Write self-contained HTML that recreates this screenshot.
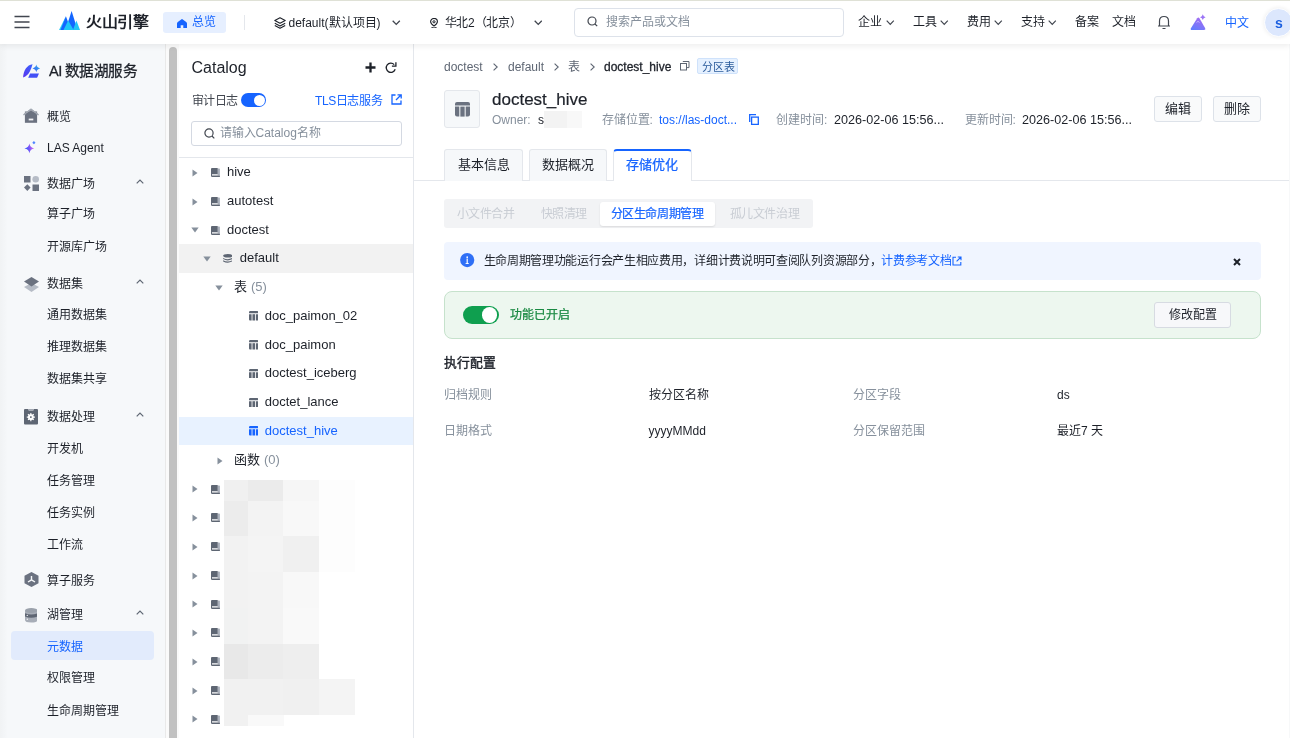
<!DOCTYPE html>
<html lang="zh-CN"><head><meta charset="utf-8">
<style>
*{box-sizing:border-box;margin:0;padding:0}
html,body{width:1290px;height:738px;overflow:hidden;background:#fff;font-family:"Liberation Sans",sans-serif;color:#1d2129}
.a{position:absolute;white-space:nowrap}
#hdr,#side,#cat,#main{will-change:transform}
#hdr{position:absolute;left:0;top:0;width:1290px;height:44px;background:#fff;box-shadow:0 2px 6px rgba(0,0,0,0.075);z-index:5}
#side{position:absolute;left:0;top:44px;width:165.5px;height:694px;background:#f6f8fa}
#sb{position:absolute;left:165px;top:44px;width:14.5px;height:694px;background:#fafafa;border-left:1px solid #e9e9e9;border-right:1px solid #ececec}
#thumb{position:absolute;left:3px;top:3px;width:8.2px;height:700px;border-radius:4px;background:#c1c1c1}
#cat{position:absolute;left:179px;top:44px;width:235px;height:694px;background:#fff;border-right:1px solid #e4e7ec}
#main{position:absolute;left:414px;top:44px;width:876px;height:694px;background:#fff}
.t12{font-size:12px;line-height:20px}
.t13{font-size:13px;line-height:20px}
</style></head>
<body>
<div id="hdr">
<div class="a" style="left:0;top:0;width:1290px;height:1px;background:#dfe1d6"></div>
<svg class="a" style="left:14px;top:15px" width="16" height="14" viewBox="0 0 16 14"><path d="M0.5 1.5H15.5M0.5 7H15.5M0.5 12.5H15.5" stroke="#41464f" stroke-width="1.6"/></svg>
<svg class="a" style="left:59px;top:11px" width="22" height="19" viewBox="0 0 22 19"><path d="M0 19 L6.9 5.3 L3 19 Z" fill="#2bd0f7"/><path d="M1.5 19 L6.9 5.3 L12 19 Z" fill="#1466ff"/><path d="M6.5 19 L12.6 0 L18.6 19 Z" fill="#1466ff"/><path d="M14 19 L17.4 9.4 L21 19 Z" fill="#22c6f6"/><path d="M4.5 19 L9.2 9.5 L14.6 19 Z" fill="#1fc6f7"/></svg>
<div class="a" style="left:86px;top:11px;font-size:16px;line-height:22px;font-weight:700;color:#1d2129;letter-spacing:-0.3px;transform:scaleY(0.9);transform-origin:0 16px">火山引擎</div>
<div class="a" style="left:163px;top:12px;width:63px;height:21px;border-radius:3px;background:#e6efff"></div>
<svg class="a" style="left:176.5px;top:18.8px" width="10" height="9.2" viewBox="0 0 10 9.2"><path d="M0 9.2 V4.6 Q0 3.6 0.8 3 L4.2 0.4 Q5 -0.2 5.8 0.4 L9.2 3 Q10 3.6 10 4.6 V9.2 H6.3 V6.2 H3.7 V9.2 Z" fill="#1664ff"/></svg>
<div class="a" style="left:192px;top:12px;font-size:12px;line-height:20px;color:#1664ff">总览</div>
<div class="a" style="left:244px;top:15px;width:1px;height:15px;background:#e4e7ec"></div>
<svg class="a" style="left:273.5px;top:16.5px" width="12" height="12" viewBox="0 0 12 12"><path d="M6 0.8 L11.2 3.5 L6 6.2 L0.8 3.5 Z M0.8 6.2 L6 8.9 L11.2 6.2 M0.8 8.6 L6 11.3 L11.2 8.6" fill="none" stroke="#1d2129" stroke-width="1.1" stroke-linejoin="round"/></svg>
<div class="a" style="left:288.5px;top:12.5px;font-size:12px;line-height:20px;color:#1d2129">default(默认项目)</div>
<svg class="a" style="left:392px;top:20px" width="8.5" height="5.5" viewBox="0 0 8.5 5.5"><path d="M0.7 0.8 L4.25 4.4 L7.8 0.8" fill="none" stroke="#41464f" stroke-width="1.3"/></svg>
<svg class="a" style="left:429.8px;top:17.5px" width="8" height="10.5" viewBox="0 0 8 10.5"><path d="M4 8 Q0.6 5.6 0.6 3.8 A3.4 3.4 0 0 1 7.4 3.8 Q7.4 5.6 4 8 Z" fill="none" stroke="#1d2129" stroke-width="1.1" stroke-linejoin="round"/><circle cx="4" cy="3.8" r="1.1" fill="none" stroke="#1d2129" stroke-width="1"/><path d="M1.5 9.6 Q4 10.6 6.5 9.6" fill="none" stroke="#1d2129" stroke-width="1.1"/></svg>
<div class="a" style="left:444.5px;top:12.5px;font-size:12px;letter-spacing:-0.2px;line-height:20px;color:#1d2129">华北2（北京）</div>
<svg class="a" style="left:533.5px;top:20px" width="8.5" height="5.5" viewBox="0 0 8.5 5.5"><path d="M0.7 0.8 L4.25 4.4 L7.8 0.8" fill="none" stroke="#41464f" stroke-width="1.3"/></svg>
<div class="a" style="left:574px;top:8px;width:270px;height:29px;border:1px solid #dde2ea;border-radius:4px;background:#fff"></div>
<svg class="a" style="left:587px;top:16px" width="11" height="12" viewBox="0 0 11 12"><circle cx="5" cy="5" r="4" fill="none" stroke="#41464f" stroke-width="1.2"/><path d="M8 8 L10.2 10.2" stroke="#41464f" stroke-width="1.2"/></svg>
<div class="a" style="left:606px;top:12px;font-size:12px;line-height:20px;color:#86909c">搜索产品或文档</div>
<div class="a" style="left:858px;top:12px;font-size:12px;line-height:20px;color:#1d2129">企业</div>
<div class="a" style="left:913px;top:12px;font-size:12px;line-height:20px;color:#1d2129">工具</div>
<div class="a" style="left:967px;top:12px;font-size:12px;line-height:20px;color:#1d2129">费用</div>
<div class="a" style="left:1021px;top:12px;font-size:12px;line-height:20px;color:#1d2129">支持</div>
<div class="a" style="left:1075px;top:12px;font-size:12px;line-height:20px;color:#1d2129">备案</div>
<div class="a" style="left:1112px;top:12px;font-size:12px;line-height:20px;color:#1d2129">文档</div>
<svg class="a" style="left:886.3px;top:20.3px" width="8.5" height="5.5" viewBox="0 0 8.5 5.5"><path d="M0.7 0.7 L4.25 4.3 L7.8 0.7" fill="none" stroke="#41464f" stroke-width="1.2"/></svg>
<svg class="a" style="left:940.3px;top:20.3px" width="8.5" height="5.5" viewBox="0 0 8.5 5.5"><path d="M0.7 0.7 L4.25 4.3 L7.8 0.7" fill="none" stroke="#41464f" stroke-width="1.2"/></svg>
<svg class="a" style="left:994.3px;top:20.3px" width="8.5" height="5.5" viewBox="0 0 8.5 5.5"><path d="M0.7 0.7 L4.25 4.3 L7.8 0.7" fill="none" stroke="#41464f" stroke-width="1.2"/></svg>
<svg class="a" style="left:1048.3px;top:20.3px" width="8.5" height="5.5" viewBox="0 0 8.5 5.5"><path d="M0.7 0.7 L4.25 4.3 L7.8 0.7" fill="none" stroke="#41464f" stroke-width="1.2"/></svg>
<svg class="a" style="left:1157px;top:14px" width="14" height="16" viewBox="0 0 14 16"><path d="M2.5 12 V7 Q2.5 2.5 7 2.5 Q11.5 2.5 11.5 7 V12 Z M1 12 H13 M5.5 14.5 H8.5" fill="none" stroke="#41464f" stroke-width="1.2"/></svg>
<svg class="a" style="left:1190px;top:14px" width="17" height="17" viewBox="0 0 17 17"><defs><linearGradient id="ga" x1="0" y1="1" x2="0.6" y2="0"><stop offset="0" stop-color="#5b80ff"/><stop offset="1" stop-color="#a36cf2"/></linearGradient></defs><path d="M7.2 4.2 Q8.5 2.8 9.6 4.4 L15.2 14.2 Q16 16 14 16 H2 Q0 16 0.9 14.2 Z" fill="url(#ga)"/><path d="M12.8 0.3 Q13.3 2.6 15.6 3.2 Q13.3 3.8 12.8 6.1 Q12.3 3.8 10 3.2 Q12.3 2.6 12.8 0.3 Z" fill="#9b74f6"/><path d="M6.5 8.5 L8 7.3 L9.5 8.5" fill="none" stroke="#c9c2ff" stroke-width="0.8"/></svg>
<div class="a" style="left:1224.5px;top:12.5px;font-size:12px;line-height:20px;color:#1664ff">中文</div>
<div class="a" style="left:1264px;top:8px;width:29px;height:29px;border-radius:50%;background:#dce7fd;border:1.5px solid #fff;box-shadow:0 0 4px rgba(0,0,0,0.08)"></div>
<div class="a" style="left:1275px;top:12.5px;font-size:14px;line-height:20px;font-weight:700;color:#1b5fe0">s</div>
</div>
<div id="side">
<div class="a" style="left:0;top:0;width:8px;height:694px;background:linear-gradient(90deg,rgba(0,0,0,0.025),rgba(0,0,0,0))"></div>
<svg class="a" style="left:22px;top:19px" width="19" height="16" viewBox="0 0 19 16"><defs><linearGradient id="gl" x1="0" y1="1" x2="0.6" y2="0"><stop offset="0" stop-color="#5a34ee"/><stop offset="1" stop-color="#3f5dfb"/></linearGradient><linearGradient id="gk" x1="0" y1="1" x2="1" y2="0"><stop offset="0" stop-color="#3f56f8"/><stop offset="1" stop-color="#2bb4ea"/></linearGradient></defs><path d="M1.1 14.5 C1.3 8 5 1.6 10.6 1.2 C9.2 5 7.8 12.4 1.1 14.5 Z" fill="url(#gl)"/><path d="M6.2 14.7 L8.1 10.6 H17 L15.1 14.7 Z" fill="#4250f6"/><path d="M14.3 1.6 Q14.9 4.8 18.1 5.4 Q14.9 6 14.3 9.2 Q13.7 6 10.5 5.4 Q13.7 4.8 14.3 1.6 Z" fill="url(#gk)"/></svg>
<div class="a" style="left:49px;top:16.5px;font-size:14.6px;line-height:20px;color:#1d2129;-webkit-text-stroke:0.3px #1d2129;letter-spacing:-0.6px">AI 数据湖服务</div>
<div class="a" style="left:11px;top:587px;width:143px;height:29px;border-radius:4px;background:#e2ebfc"></div>
<div class="a" style="left:47px;top:62.7px;font-size:12px;line-height:20px;color:#1d2129">概览</div>
<svg class="a" style="left:23px;top:64px" width="16" height="15" viewBox="0 0 16 15"><rect x="1.9" y="3.5" width="12.2" height="11.3" fill="#6b7280"/><path d="M8 0.4 L15.7 6.2 V7.6 L8 2.3 L0.3 7.6 V6.2 Z" fill="#a3a9b3"/><path d="M8 0.5 L15.6 6.3 L14.3 7.2 L8 2.6 L1.7 7.2 L0.4 6.3 Z" fill="#a3a9b3"/><path d="M1.9 6.5 L8 2.4 L14.1 6.5" fill="#6b7280"/><rect x="5.7" y="10.6" width="4.6" height="1.8" fill="#f2f3f5"/></svg>
<div class="a" style="left:47px;top:93.5px;font-size:12px;line-height:20px;color:#1d2129">LAS Agent</div>
<svg class="a" style="left:24px;top:97px" width="13" height="13" viewBox="0 0 13 13"><defs><linearGradient id="gs" x1="0" y1="0.6" x2="1" y2="0.4"><stop offset="0" stop-color="#2458ff"/><stop offset="0.5" stop-color="#7a55f7"/><stop offset="1" stop-color="#e070ee"/></linearGradient></defs><path d="M5.4 2.6 Q5.9 6.6 10.3 7.4 Q5.9 8.2 5.4 12.2 Q4.9 8.2 0.5 7.4 Q4.9 6.6 5.4 2.6 Z" fill="url(#gs)"/><path d="M9.9 0.1 L11.5 1.7 L9.9 3.3 L8.3 1.7 Z" fill="#4f86ff"/></svg>
<div class="a" style="left:47px;top:130.2px;font-size:12px;line-height:20px;color:#1d2129">数据广场</div>
<svg class="a" style="left:23.5px;top:131.5px" width="15" height="15" viewBox="0 0 15 15"><rect x="0" y="0" width="6.5" height="6.5" fill="#6b7280"/><circle cx="11.7" cy="3.3" r="3.3" fill="#b6bcc6"/><path d="M3.3 8.3 L6.6 11.6 L3.3 14.9 L0 11.6 Z" fill="#6b7280"/><rect x="8.5" y="8.5" width="6.5" height="6.5" fill="#6b7280"/></svg>
<svg class="a" style="left:135.5px;top:135px" width="8" height="5" viewBox="0 0 8 5"><path d="M0.7 4.3 L4 1 L7.3 4.3" fill="none" stroke="#5e6673" stroke-width="1.2"/></svg>
<div class="a" style="left:47px;top:160.2px;font-size:12px;line-height:20px;color:#1d2129">算子广场</div>
<div class="a" style="left:47px;top:192.5px;font-size:12px;line-height:20px;color:#1d2129">开源库广场</div>
<div class="a" style="left:47px;top:230.0px;font-size:12px;line-height:20px;color:#1d2129">数据集</div>
<svg class="a" style="left:23.5px;top:232.5px" width="15" height="15" viewBox="0 0 15 15"><path d="M7.5 6 L15 10 L7.5 15 L0 10 Z" fill="#b6bcc6"/><path d="M7.5 0 L15 4.5 L7.5 9.5 L0 4.5 Z" fill="#6b7280"/></svg>
<svg class="a" style="left:135.5px;top:234.8px" width="8" height="5" viewBox="0 0 8 5"><path d="M0.7 4.3 L4 1 L7.3 4.3" fill="none" stroke="#5e6673" stroke-width="1.2"/></svg>
<div class="a" style="left:47px;top:261.0px;font-size:12px;line-height:20px;color:#1d2129">通用数据集</div>
<div class="a" style="left:47px;top:293.0px;font-size:12px;line-height:20px;color:#1d2129">推理数据集</div>
<div class="a" style="left:47px;top:325.4px;font-size:12px;line-height:20px;color:#1d2129">数据集共享</div>
<div class="a" style="left:47px;top:363.2px;font-size:12px;line-height:20px;color:#1d2129">数据处理</div>
<svg class="a" style="left:24px;top:365px" width="14" height="15.5" viewBox="0 0 14 15.5"><path d="M1 0 H4 L5 1.5 H9 L10 0 H13 Q14 0 14 1 V14.5 Q14 15.5 13 15.5 H1 Q0 15.5 0 14.5 V1 Q0 0 1 0 Z" fill="#5e6673"/><rect x="4.2" y="0" width="5.6" height="1.5" fill="#a3a9b3"/><path d="M9.78 7.46 L10.92 7.57 L10.92 8.63 L9.78 8.74 L9.38 9.72 L10.10 10.60 L9.35 11.35 L8.47 10.63 L7.49 11.03 L7.38 12.17 L6.32 12.17 L6.21 11.03 L5.23 10.63 L4.35 11.35 L3.60 10.60 L4.32 9.72 L3.92 8.74 L2.78 8.63 L2.78 7.57 L3.92 7.46 L4.32 6.48 L3.60 5.60 L4.35 4.85 L5.23 5.57 L6.21 5.17 L6.32 4.03 L7.38 4.03 L7.49 5.17 L8.47 5.57 L9.35 4.85 L10.10 5.60 L9.38 6.48 Z" fill="#fff"/><circle cx="6.85" cy="8.1" r="1.6" fill="#fff"/><rect x="6.05" y="7.3" width="1.6" height="1.6" fill="#5e6673"/></svg>
<svg class="a" style="left:135.5px;top:368px" width="8" height="5" viewBox="0 0 8 5"><path d="M0.7 4.3 L4 1 L7.3 4.3" fill="none" stroke="#5e6673" stroke-width="1.2"/></svg>
<div class="a" style="left:47px;top:394.7px;font-size:12px;line-height:20px;color:#1d2129">开发机</div>
<div class="a" style="left:47px;top:426.5px;font-size:12px;line-height:20px;color:#1d2129">任务管理</div>
<div class="a" style="left:47px;top:458.8px;font-size:12px;line-height:20px;color:#1d2129">任务实例</div>
<div class="a" style="left:47px;top:491.0px;font-size:12px;line-height:20px;color:#1d2129">工作流</div>
<div class="a" style="left:47px;top:527.2px;font-size:12px;line-height:20px;color:#1d2129">算子服务</div>
<svg class="a" style="left:23.5px;top:528px" width="15" height="15" viewBox="0 0 15 15"><path d="M7.5 0 L14.5 3.8 V11.2 L7.5 15 L0.5 11.2 V3.8 Z" fill="#6b7280"/><path d="M7.5 4 V7.8 M7.5 7.8 L4 10 M7.5 7.8 L11 10" stroke="#f6f8fa" stroke-width="1.4"/></svg>
<div class="a" style="left:47px;top:561.2px;font-size:12px;line-height:20px;color:#1d2129">湖管理</div>
<svg class="a" style="left:24.8px;top:564px" width="12.5" height="14.5" viewBox="0 0 12.5 14.5"><path d="M0 2.5 V12 Q0 14.5 6.25 14.5 Q12.5 14.5 12.5 12 V2.5 Z" fill="#a7adb7"/><ellipse cx="6.25" cy="2.5" rx="6.25" ry="2.5" fill="#9aa1ab"/><path d="M0 5.2 Q6.25 7.6 12.5 5.2 V8.6 Q6.25 11 0 8.6 Z" fill="#5e6673"/><circle cx="2.3" cy="7.4" r="0.7" fill="#e5e7eb"/><circle cx="2.3" cy="11.3" r="0.7" fill="#f3f4f6"/></svg>
<svg class="a" style="left:135.5px;top:566px" width="8" height="5" viewBox="0 0 8 5"><path d="M0.7 4.3 L4 1 L7.3 4.3" fill="none" stroke="#5e6673" stroke-width="1.2"/></svg>
<div class="a" style="left:47px;top:592.6px;font-size:12px;line-height:20px;color:#1664ff">元数据</div>
<div class="a" style="left:47px;top:624.0px;font-size:12px;line-height:20px;color:#1d2129">权限管理</div>
<div class="a" style="left:47px;top:656.9px;font-size:12px;line-height:20px;color:#1d2129">生命周期管理</div>
</div>
<div id="sb"><div id="thumb"></div></div>
<div id="cat">
<div class="a" style="left:12.5px;top:14px;font-size:16px;line-height:20px;color:#1d2129">Catalog</div>
<svg class="a" style="left:186px;top:18px" width="11" height="11" viewBox="0 0 11 11"><path d="M5.5 0.5 V10.5 M0.5 5.5 H10.5" stroke="#1d2129" stroke-width="2.3"/></svg>
<svg class="a" style="left:206px;top:17.5px" width="12.5" height="12.5" viewBox="0 0 12.5 12.5"><path d="M10.2 7.3 A4.6 4.6 0 1 1 9.2 2.6" fill="none" stroke="#1d2129" stroke-width="1.3"/><path d="M6.9 4.1 H10.9 V0.3" fill="none" stroke="#1d2129" stroke-width="1.3"/></svg>
<div class="a" style="left:12.5px;top:47px;font-size:12px;line-height:20px;color:#41464f;letter-spacing:-0.5px">审计日志</div>
<div class="a" style="left:62px;top:49px;width:25px;height:14px;border-radius:7px;background:#1664ff"></div>
<div class="a" style="left:74.5px;top:50.5px;width:11.3px;height:11.3px;border-radius:50%;background:#fff"></div>
<div class="a" style="left:136px;top:47px;font-size:12px;line-height:20px;color:#1664ff;letter-spacing:-0.4px">TLS日志服务</div>
<svg class="a" style="left:211.5px;top:50px" width="11" height="11" viewBox="0 0 11 11"><path d="M4.5 1 H1 V10 H10 V6.5" fill="none" stroke="#1664ff" stroke-width="1.3"/><path d="M6.5 0.8 H10.2 V4.5 M10.2 0.8 L5 6" fill="none" stroke="#1664ff" stroke-width="1.3"/></svg>
<div class="a" style="left:12px;top:77px;width:211px;height:24.5px;border:1px solid #d4d9e2;border-radius:3px"></div>
<svg class="a" style="left:24.5px;top:83.5px" width="11" height="11" viewBox="0 0 11 11"><circle cx="5" cy="5" r="4.1" fill="none" stroke="#41464f" stroke-width="1.2"/><path d="M8 8 L10.3 10.3" stroke="#41464f" stroke-width="1.2"/></svg>
<div class="a" style="left:40.5px;top:79px;font-size:12px;line-height:20px;color:#86909c">请输入Catalog名称</div>
<div class="a" style="left:0px;top:113px;width:234px;height:1px;background:#e4e7ec"></div>
<div class="a" style="left:0px;top:200px;width:234px;height:28.5px;background:#f2f2f2"></div>
<div class="a" style="left:0px;top:372.5px;width:234px;height:28.8px;background:#e8f2ff"></div>
<svg class="a" style="left:13.300000000000011px;top:124.5px" width="6" height="8" viewBox="0 0 6 8"><path d="M0.5 0.5 L5.5 4 L0.5 7.5 Z" fill="#86909c"/></svg>
<div class="a" style="left:48px;top:117.5px;font-size:13px;line-height:20px;color:#1d2129">hive</div>
<svg class="a" style="left:32px;top:123.8px" width="9" height="9" viewBox="0 0 9 9"><path d="M6.6 0.6 H8.3 Q8.9 0.6 8.9 1.2 V7.4 H6.6 Z" fill="#aab0bb"/><path d="M1 0 H6.7 V6.2 H0 V1 Q0 0 1 0 Z" fill="#5e6673"/><path d="M0 6 H1 V7.4 H8.9 V9 H1.2 Q0 9 0 7.8 Z" fill="#5e6673"/></svg>
<svg class="a" style="left:13.300000000000011px;top:153.5px" width="6" height="8" viewBox="0 0 6 8"><path d="M0.5 0.5 L5.5 4 L0.5 7.5 Z" fill="#86909c"/></svg>
<div class="a" style="left:48px;top:146.5px;font-size:13px;line-height:20px;color:#1d2129">autotest</div>
<svg class="a" style="left:32px;top:152.8px" width="9" height="9" viewBox="0 0 9 9"><path d="M6.6 0.6 H8.3 Q8.9 0.6 8.9 1.2 V7.4 H6.6 Z" fill="#aab0bb"/><path d="M1 0 H6.7 V6.2 H0 V1 Q0 0 1 0 Z" fill="#5e6673"/><path d="M0 6 H1 V7.4 H8.9 V9 H1.2 Q0 9 0 7.8 Z" fill="#5e6673"/></svg>
<svg class="a" style="left:12.300000000000011px;top:183.0px" width="8" height="6" viewBox="0 0 8 6"><path d="M0.3 0.5 H7.7 L4 5.5 Z" fill="#86909c"/></svg>
<div class="a" style="left:48px;top:175.5px;font-size:13px;line-height:20px;color:#1d2129">doctest</div>
<svg class="a" style="left:32px;top:181.8px" width="9" height="9" viewBox="0 0 9 9"><path d="M6.6 0.6 H8.3 Q8.9 0.6 8.9 1.2 V7.4 H6.6 Z" fill="#aab0bb"/><path d="M1 0 H6.7 V6.2 H0 V1 Q0 0 1 0 Z" fill="#5e6673"/><path d="M0 6 H1 V7.4 H8.9 V9 H1.2 Q0 9 0 7.8 Z" fill="#5e6673"/></svg>
<svg class="a" style="left:24px;top:211.8px" width="8" height="6" viewBox="0 0 8 6"><path d="M0.3 0.5 H7.7 L4 5.5 Z" fill="#86909c"/></svg>
<div class="a" style="left:60.80000000000001px;top:204.3px;font-size:13px;line-height:20px;color:#1d2129">default</div>
<svg class="a" style="left:43.8px;top:210px" width="9.5" height="9" viewBox="0 0 9.5 9"><ellipse cx="4.75" cy="1.8" rx="4.6" ry="1.8" fill="#5e6673"/><path d="M0.15 3.9 Q4.75 6.5 9.35 3.9 V5.1 Q4.75 7.7 0.15 5.1 Z" fill="#5e6673"/><path d="M0.15 6.3 Q4.75 8.9 9.35 6.3 V7.4 Q4.75 10 0.15 7.4 Z" fill="#5e6673"/></svg>
<svg class="a" style="left:36px;top:240.5px" width="8" height="6" viewBox="0 0 8 6"><path d="M0.3 0.5 H7.7 L4 5.5 Z" fill="#86909c"/></svg>
<div class="a" style="left:55.30000000000001px;top:233px;font-size:13px;line-height:20px;color:#1d2129">表 <span style="color:#86909c">(5)</span></div>
<div class="a" style="left:85.80000000000001px;top:261.8px;font-size:13px;line-height:20px;color:#1d2129">doc_paimon_02</div>
<svg class="a" style="left:69.5px;top:267.3px" width="9.5" height="9.5" viewBox="0 0 9.5 9.5"><path d="M0 1.2 Q0 0 1.2 0 H8.3 Q9.5 0 9.5 1.2 V2.3 H0 Z" fill="#5e6673"/><path d="M0 3.2 H2.6 V9.5 H1 Q0 9.5 0 8.5 Z" fill="#5e6673"/><rect x="3.45" y="3.2" width="2.6" height="6.3" fill="#5e6673"/><path d="M6.9 3.2 H9.5 V8.5 Q9.5 9.5 8.5 9.5 H6.9 Z" fill="#5e6673"/></svg>
<div class="a" style="left:85.80000000000001px;top:290.5px;font-size:13px;line-height:20px;color:#1d2129">doc_paimon</div>
<svg class="a" style="left:69.5px;top:296.0px" width="9.5" height="9.5" viewBox="0 0 9.5 9.5"><path d="M0 1.2 Q0 0 1.2 0 H8.3 Q9.5 0 9.5 1.2 V2.3 H0 Z" fill="#5e6673"/><path d="M0 3.2 H2.6 V9.5 H1 Q0 9.5 0 8.5 Z" fill="#5e6673"/><rect x="3.45" y="3.2" width="2.6" height="6.3" fill="#5e6673"/><path d="M6.9 3.2 H9.5 V8.5 Q9.5 9.5 8.5 9.5 H6.9 Z" fill="#5e6673"/></svg>
<div class="a" style="left:85.80000000000001px;top:319.3px;font-size:13px;line-height:20px;color:#1d2129">doctest_iceberg</div>
<svg class="a" style="left:69.5px;top:324.8px" width="9.5" height="9.5" viewBox="0 0 9.5 9.5"><path d="M0 1.2 Q0 0 1.2 0 H8.3 Q9.5 0 9.5 1.2 V2.3 H0 Z" fill="#5e6673"/><path d="M0 3.2 H2.6 V9.5 H1 Q0 9.5 0 8.5 Z" fill="#5e6673"/><rect x="3.45" y="3.2" width="2.6" height="6.3" fill="#5e6673"/><path d="M6.9 3.2 H9.5 V8.5 Q9.5 9.5 8.5 9.5 H6.9 Z" fill="#5e6673"/></svg>
<div class="a" style="left:85.80000000000001px;top:348px;font-size:13px;line-height:20px;color:#1d2129">doctet_lance</div>
<svg class="a" style="left:69.5px;top:353.5px" width="9.5" height="9.5" viewBox="0 0 9.5 9.5"><path d="M0 1.2 Q0 0 1.2 0 H8.3 Q9.5 0 9.5 1.2 V2.3 H0 Z" fill="#5e6673"/><path d="M0 3.2 H2.6 V9.5 H1 Q0 9.5 0 8.5 Z" fill="#5e6673"/><rect x="3.45" y="3.2" width="2.6" height="6.3" fill="#5e6673"/><path d="M6.9 3.2 H9.5 V8.5 Q9.5 9.5 8.5 9.5 H6.9 Z" fill="#5e6673"/></svg>
<div class="a" style="left:85.80000000000001px;top:376.8px;font-size:13px;line-height:20px;color:#1664ff">doctest_hive</div>
<svg class="a" style="left:69.5px;top:382.3px" width="9.5" height="9.5" viewBox="0 0 9.5 9.5"><path d="M0 1.2 Q0 0 1.2 0 H8.3 Q9.5 0 9.5 1.2 V2.3 H0 Z" fill="#1664ff"/><path d="M0 3.2 H2.6 V9.5 H1 Q0 9.5 0 8.5 Z" fill="#1664ff"/><rect x="3.45" y="3.2" width="2.6" height="6.3" fill="#1664ff"/><path d="M6.9 3.2 H9.5 V8.5 Q9.5 9.5 8.5 9.5 H6.9 Z" fill="#1664ff"/></svg>
<svg class="a" style="left:37.8px;top:412.5px" width="6" height="8" viewBox="0 0 6 8"><path d="M0.5 0.5 L5.5 4 L0.5 7.5 Z" fill="#86909c"/></svg>
<div class="a" style="left:55.30000000000001px;top:405.5px;font-size:13px;line-height:20px;color:#1d2129">函数 <span style="color:#86909c">(0)</span></div>
<svg class="a" style="left:13.300000000000011px;top:441.3px" width="6" height="8" viewBox="0 0 6 8"><path d="M0.5 0.5 L5.5 4 L0.5 7.5 Z" fill="#86909c"/></svg>
<svg class="a" style="left:32px;top:440.6px" width="9" height="9" viewBox="0 0 9 9"><path d="M6.6 0.6 H8.3 Q8.9 0.6 8.9 1.2 V7.4 H6.6 Z" fill="#aab0bb"/><path d="M1 0 H6.7 V6.2 H0 V1 Q0 0 1 0 Z" fill="#5e6673"/><path d="M0 6 H1 V7.4 H8.9 V9 H1.2 Q0 9 0 7.8 Z" fill="#5e6673"/></svg>
<svg class="a" style="left:13.300000000000011px;top:470.0px" width="6" height="8" viewBox="0 0 6 8"><path d="M0.5 0.5 L5.5 4 L0.5 7.5 Z" fill="#86909c"/></svg>
<svg class="a" style="left:32px;top:469.3px" width="9" height="9" viewBox="0 0 9 9"><path d="M6.6 0.6 H8.3 Q8.9 0.6 8.9 1.2 V7.4 H6.6 Z" fill="#aab0bb"/><path d="M1 0 H6.7 V6.2 H0 V1 Q0 0 1 0 Z" fill="#5e6673"/><path d="M0 6 H1 V7.4 H8.9 V9 H1.2 Q0 9 0 7.8 Z" fill="#5e6673"/></svg>
<svg class="a" style="left:13.300000000000011px;top:498.8px" width="6" height="8" viewBox="0 0 6 8"><path d="M0.5 0.5 L5.5 4 L0.5 7.5 Z" fill="#86909c"/></svg>
<svg class="a" style="left:32px;top:498.1px" width="9" height="9" viewBox="0 0 9 9"><path d="M6.6 0.6 H8.3 Q8.9 0.6 8.9 1.2 V7.4 H6.6 Z" fill="#aab0bb"/><path d="M1 0 H6.7 V6.2 H0 V1 Q0 0 1 0 Z" fill="#5e6673"/><path d="M0 6 H1 V7.4 H8.9 V9 H1.2 Q0 9 0 7.8 Z" fill="#5e6673"/></svg>
<svg class="a" style="left:13.300000000000011px;top:527.5px" width="6" height="8" viewBox="0 0 6 8"><path d="M0.5 0.5 L5.5 4 L0.5 7.5 Z" fill="#86909c"/></svg>
<svg class="a" style="left:32px;top:526.8px" width="9" height="9" viewBox="0 0 9 9"><path d="M6.6 0.6 H8.3 Q8.9 0.6 8.9 1.2 V7.4 H6.6 Z" fill="#aab0bb"/><path d="M1 0 H6.7 V6.2 H0 V1 Q0 0 1 0 Z" fill="#5e6673"/><path d="M0 6 H1 V7.4 H8.9 V9 H1.2 Q0 9 0 7.8 Z" fill="#5e6673"/></svg>
<svg class="a" style="left:13.300000000000011px;top:556.3px" width="6" height="8" viewBox="0 0 6 8"><path d="M0.5 0.5 L5.5 4 L0.5 7.5 Z" fill="#86909c"/></svg>
<svg class="a" style="left:32px;top:555.6px" width="9" height="9" viewBox="0 0 9 9"><path d="M6.6 0.6 H8.3 Q8.9 0.6 8.9 1.2 V7.4 H6.6 Z" fill="#aab0bb"/><path d="M1 0 H6.7 V6.2 H0 V1 Q0 0 1 0 Z" fill="#5e6673"/><path d="M0 6 H1 V7.4 H8.9 V9 H1.2 Q0 9 0 7.8 Z" fill="#5e6673"/></svg>
<svg class="a" style="left:13.300000000000011px;top:585.0px" width="6" height="8" viewBox="0 0 6 8"><path d="M0.5 0.5 L5.5 4 L0.5 7.5 Z" fill="#86909c"/></svg>
<svg class="a" style="left:32px;top:584.3px" width="9" height="9" viewBox="0 0 9 9"><path d="M6.6 0.6 H8.3 Q8.9 0.6 8.9 1.2 V7.4 H6.6 Z" fill="#aab0bb"/><path d="M1 0 H6.7 V6.2 H0 V1 Q0 0 1 0 Z" fill="#5e6673"/><path d="M0 6 H1 V7.4 H8.9 V9 H1.2 Q0 9 0 7.8 Z" fill="#5e6673"/></svg>
<svg class="a" style="left:13.300000000000011px;top:613.8px" width="6" height="8" viewBox="0 0 6 8"><path d="M0.5 0.5 L5.5 4 L0.5 7.5 Z" fill="#86909c"/></svg>
<svg class="a" style="left:32px;top:613.1px" width="9" height="9" viewBox="0 0 9 9"><path d="M6.6 0.6 H8.3 Q8.9 0.6 8.9 1.2 V7.4 H6.6 Z" fill="#aab0bb"/><path d="M1 0 H6.7 V6.2 H0 V1 Q0 0 1 0 Z" fill="#5e6673"/><path d="M0 6 H1 V7.4 H8.9 V9 H1.2 Q0 9 0 7.8 Z" fill="#5e6673"/></svg>
<svg class="a" style="left:13.300000000000011px;top:642.5px" width="6" height="8" viewBox="0 0 6 8"><path d="M0.5 0.5 L5.5 4 L0.5 7.5 Z" fill="#86909c"/></svg>
<svg class="a" style="left:32px;top:641.8px" width="9" height="9" viewBox="0 0 9 9"><path d="M6.6 0.6 H8.3 Q8.9 0.6 8.9 1.2 V7.4 H6.6 Z" fill="#aab0bb"/><path d="M1 0 H6.7 V6.2 H0 V1 Q0 0 1 0 Z" fill="#5e6673"/><path d="M0 6 H1 V7.4 H8.9 V9 H1.2 Q0 9 0 7.8 Z" fill="#5e6673"/></svg>
<svg class="a" style="left:13.300000000000011px;top:671.3px" width="6" height="8" viewBox="0 0 6 8"><path d="M0.5 0.5 L5.5 4 L0.5 7.5 Z" fill="#86909c"/></svg>
<svg class="a" style="left:32px;top:670.6px" width="9" height="9" viewBox="0 0 9 9"><path d="M6.6 0.6 H8.3 Q8.9 0.6 8.9 1.2 V7.4 H6.6 Z" fill="#aab0bb"/><path d="M1 0 H6.7 V6.2 H0 V1 Q0 0 1 0 Z" fill="#5e6673"/><path d="M0 6 H1 V7.4 H8.9 V9 H1.2 Q0 9 0 7.8 Z" fill="#5e6673"/></svg>
<div class="a" style="left:45px;top:436px;width:24.3px;height:20.8px;background:#f0f0f0"></div>
<div class="a" style="left:69px;top:436px;width:35.6px;height:20.8px;background:#ebebeb"></div>
<div class="a" style="left:104.30000000000001px;top:436px;width:35.8px;height:20.8px;background:#f6f6f6"></div>
<div class="a" style="left:139.8px;top:436px;width:35.8px;height:20.8px;background:#fdfdfd"></div>
<div class="a" style="left:45px;top:456.5px;width:24.3px;height:36.2px;background:#ececec"></div>
<div class="a" style="left:69px;top:456.5px;width:35.6px;height:36.2px;background:#f3f3f3"></div>
<div class="a" style="left:104.30000000000001px;top:456.5px;width:35.8px;height:36.2px;background:#f8f8f8"></div>
<div class="a" style="left:139.8px;top:456.5px;width:35.8px;height:36.2px;background:#fdfdfd"></div>
<div class="a" style="left:45px;top:492.4px;width:24.3px;height:35.7px;background:#f2f2f2"></div>
<div class="a" style="left:69px;top:492.4px;width:35.6px;height:35.7px;background:#f4f4f4"></div>
<div class="a" style="left:104.30000000000001px;top:492.4px;width:35.8px;height:35.7px;background:#f0f0f0"></div>
<div class="a" style="left:139.8px;top:492.4px;width:35.8px;height:35.7px;background:#fdfdfd"></div>
<div class="a" style="left:45px;top:527.8px;width:24.3px;height:36.0px;background:#f2f2f2"></div>
<div class="a" style="left:69px;top:527.8px;width:35.6px;height:36.0px;background:#f3f3f3"></div>
<div class="a" style="left:104.30000000000001px;top:527.8px;width:35.8px;height:36.0px;background:#f8f8f8"></div>
<div class="a" style="left:45px;top:563.5px;width:24.3px;height:36.8px;background:#f1f2f2"></div>
<div class="a" style="left:69px;top:563.5px;width:35.6px;height:36.8px;background:#f3f3f3"></div>
<div class="a" style="left:104.30000000000001px;top:563.5px;width:35.8px;height:36.8px;background:#f9f9f9"></div>
<div class="a" style="left:45px;top:600px;width:24.3px;height:35.4px;background:#e8e8e8"></div>
<div class="a" style="left:69px;top:600px;width:35.6px;height:35.4px;background:#ececec"></div>
<div class="a" style="left:104.30000000000001px;top:600px;width:35.8px;height:35.4px;background:#eeeeee"></div>
<div class="a" style="left:45px;top:635.1px;width:24.3px;height:35.8px;background:#f1f1f1"></div>
<div class="a" style="left:69px;top:635.1px;width:35.6px;height:35.8px;background:#f1f1f1"></div>
<div class="a" style="left:104.30000000000001px;top:635.1px;width:35.8px;height:35.8px;background:#f0f0f0"></div>
<div class="a" style="left:139.8px;top:635.1px;width:35.8px;height:35.8px;background:#f4f4f4"></div>
<div class="a" style="left:45px;top:670.6px;width:24.3px;height:11.7px;background:#f1f1f1"></div>
<div class="a" style="left:69px;top:670.6px;width:35.6px;height:11.7px;background:#f9f9f9"></div>
</div>
<div id="main">
<div class="a" style="left:30px;top:12.5px;font-size:12px;line-height:20px;color:#5e6673">doctest</div>
<div class="a" style="left:94px;top:12.5px;font-size:12px;line-height:20px;color:#5e6673">default</div>
<div class="a" style="left:153.5px;top:12.5px;font-size:12px;line-height:20px;color:#5e6673">表</div>
<div class="a" style="left:190px;top:12.5px;font-size:12px;line-height:20px;color:#1d2129;-webkit-text-stroke:0.3px #1d2129">doctest_hive</div>
<svg class="a" style="left:79px;top:18.5px" width="5" height="8" viewBox="0 0 5 8"><path d="M0.6 0.6 L4.2 4 L0.6 7.4" fill="none" stroke="#5e6673" stroke-width="1.1"/></svg>
<svg class="a" style="left:140px;top:18.5px" width="5" height="8" viewBox="0 0 5 8"><path d="M0.6 0.6 L4.2 4 L0.6 7.4" fill="none" stroke="#5e6673" stroke-width="1.1"/></svg>
<svg class="a" style="left:176px;top:18.5px" width="5" height="8" viewBox="0 0 5 8"><path d="M0.6 0.6 L4.2 4 L0.6 7.4" fill="none" stroke="#5e6673" stroke-width="1.1"/></svg>
<svg class="a" style="left:266px;top:16.5px" width="10" height="10" viewBox="0 0 10 10"><rect x="0.5" y="2.5" width="6" height="6.5" fill="none" stroke="#5e6673" stroke-width="1"/><path d="M2.8 0.5 H9 V6.6 H6.5" fill="none" stroke="#5e6673" stroke-width="1"/></svg>
<div class="a" style="left:283px;top:14px;width:40.5px;height:16px;background:#e6f1ff;border:1px solid #cfe2fb;border-radius:2px"></div>
<div class="a" style="left:287.5px;top:12.5px;font-size:11px;line-height:20px;color:#2c5c9c;letter-spacing:0.2px">分区表</div>
<div class="a" style="left:30px;top:46px;width:36px;height:38px;background:#f6f8fa;border:1px solid #e4e7ec;border-radius:3px"></div>
<svg class="a" style="left:40.5px;top:57.5px" width="15" height="15" viewBox="0 0 15 15"><path d="M0 2 Q0 0 2 0 H13 Q15 0 15 2 V3.4 H0 Z" fill="#6b7280"/><path d="M0 4.6 H4.3 V14.6 H2 Q0 14.6 0 12.6 Z" fill="#6b7280"/><rect x="5.35" y="4.6" width="4.3" height="10" fill="#6b7280"/><path d="M10.7 4.6 H15 V12.6 Q15 14.6 13 14.6 H10.7 Z" fill="#6b7280"/></svg>
<div class="a" style="left:78px;top:45px;font-size:17px;line-height:22px;font-weight:500;color:#1d2129;-webkit-text-stroke:0.2px #1d2129">doctest_hive</div>
<div class="a" style="left:78px;top:66px;font-size:12px;line-height:20px;color:#86909c">Owner:</div>
<div class="a" style="left:124px;top:66px;font-size:12px;line-height:20px;color:#1d2129">s</div>
<div class="a" style="left:130px;top:67px;width:22.5px;height:16.5px;background:#f3f3f3"></div>
<div class="a" style="left:152.5px;top:67px;width:15.5px;height:16.5px;background:#f8f8f8"></div>
<div class="a" style="left:187.5px;top:66px;font-size:12px;line-height:20px;color:#86909c">存储位置:</div>
<div class="a" style="left:245px;top:66px;font-size:12px;line-height:20px;color:#1664ff">tos://las-doct...</div>
<svg class="a" style="left:334.5px;top:70px" width="10" height="11" viewBox="0 0 10 11"><rect x="2.6" y="3.1" width="6.7" height="7.3" fill="none" stroke="#1664ff" stroke-width="1.3"/><path d="M0.7 8 V0.7 H7" fill="none" stroke="#1664ff" stroke-width="1.3"/></svg>
<div class="a" style="left:362px;top:66px;font-size:12px;line-height:20px;color:#86909c">创建时间:</div>
<div class="a" style="left:420px;top:66px;font-size:12.6px;line-height:20px;color:#1d2129">2026-02-06 15:56...</div>
<div class="a" style="left:550.5px;top:66px;font-size:12px;line-height:20px;color:#86909c">更新时间:</div>
<div class="a" style="left:608px;top:66px;font-size:12.6px;line-height:20px;color:#1d2129">2026-02-06 15:56...</div>
<div class="a" style="left:739.5px;top:52px;width:48px;height:25.5px;background:#f9fafb;border:1px solid #dde2e9;border-radius:3px;font-size:13px;line-height:23.5px;text-align:center;color:#1d2129">编辑</div>
<div class="a" style="left:798.5px;top:52px;width:48px;height:25.5px;background:#f9fafb;border:1px solid #dde2e9;border-radius:3px;font-size:13px;line-height:23.5px;text-align:center;color:#1d2129">删除</div>
<div class="a" style="left:0px;top:136px;width:876px;height:1px;background:#e4e7ec"></div>
<div class="a" style="left:30px;top:105px;width:79px;height:32px;background:#f6f8fa;border:1px solid #e4e7ec;border-bottom:none;border-radius:3px 3px 0 0;font-size:13px;line-height:30px;text-align:center;color:#1d2129">基本信息</div>
<div class="a" style="left:114.5px;top:105px;width:78px;height:32px;background:#f6f8fa;border:1px solid #e4e7ec;border-bottom:none;border-radius:3px 3px 0 0;font-size:13px;line-height:30px;text-align:center;color:#1d2129">数据概况</div>
<div class="a" style="left:198.5px;top:105px;width:79.5px;height:32px;background:#fff;border:1px solid #e4e7ec;border-top:2px solid #1664ff;border-bottom:none;border-radius:4px 4px 0 0;font-size:13px;line-height:28px;text-align:center;font-weight:500;color:#1664ff;-webkit-text-stroke:0.25px #1664ff">存储优化</div>
<div class="a" style="left:30px;top:155px;width:369px;height:29px;background:#f2f3f5;border-radius:3px"></div>
<div class="a" style="left:186px;top:158px;width:115px;height:23.5px;background:#fff;border-radius:3px;box-shadow:0 1px 2px rgba(0,0,0,0.1)"></div>
<div class="a" style="left:42.5px;top:159.5px;font-size:12px;line-height:20px;color:#c9cdd4;letter-spacing:-0.4px">小文件合并</div>
<div class="a" style="left:126.5px;top:159.5px;font-size:12px;line-height:20px;color:#c9cdd4;letter-spacing:-0.4px">快照清理</div>
<div class="a" style="left:196.5px;top:159.5px;font-size:12px;line-height:20px;color:#1664ff;letter-spacing:-0.35px;-webkit-text-stroke:0.2px #1664ff">分区生命周期管理</div>
<div class="a" style="left:315.5px;top:159.5px;font-size:12px;line-height:20px;color:#c9cdd4;letter-spacing:-0.4px">孤儿文件治理</div>
<div class="a" style="left:30px;top:198px;width:817px;height:38px;background:#f0f5ff;border-radius:4px"></div>
<svg class="a" style="left:45.5px;top:208.5px" width="15" height="15" viewBox="0 0 15 15"><circle cx="7.2" cy="7.1" r="7.1" fill="#2f6ff6"/><circle cx="7.2" cy="4.2" r="0.85" fill="#fff"/><path d="M6.6 5.6 H7.8 V10 L9 10.4 V10.9 H5.4 V10.4 L6.6 10 Z" fill="#fff"/></svg>
<div class="a" style="left:69.5px;top:206.5px;font-size:12px;line-height:20px;color:#1d2129;letter-spacing:-0.3px">生命周期管理功能运行会产生相应费用，详细计费说明可查阅队列资源部分，<span style="color:#1664ff">计费参考文档</span></div>
<svg class="a" style="left:538px;top:211.5px" width="10" height="10" viewBox="0 0 10 10"><path d="M4 1.2 H1 V9 H8.8 V6" fill="none" stroke="#1664ff" stroke-width="1.1"/><path d="M5.8 1 H9 V4.2 M9 1 L4.6 5.4" fill="none" stroke="#1664ff" stroke-width="1.1"/></svg>
<svg class="a" style="left:818.5px;top:213.5px" width="8" height="8" viewBox="0 0 8 8"><path d="M1 1 L7 7 M7 1 L1 7" stroke="#1d2129" stroke-width="2"/></svg>
<div class="a" style="left:30px;top:247px;width:817px;height:48px;background:#edf7ef;border:1px solid #c6e2cc;border-radius:8px"></div>
<div class="a" style="left:49px;top:261.5px;width:36px;height:18.5px;border-radius:9.25px;background:#0f9f4f"></div>
<div class="a" style="left:67.5px;top:263px;width:15.5px;height:15.5px;border-radius:50%;background:#fff"></div>
<div class="a" style="left:96px;top:260.5px;font-size:12px;line-height:20px;color:#1b8a43;-webkit-text-stroke:0.25px #1b8a43">功能已开启</div>
<div class="a" style="left:740px;top:258px;width:77px;height:26px;background:#f7f8fa;border:1px solid #d7dbe2;border-radius:3px;font-size:12px;line-height:24px;text-align:center;color:#1d2129">修改配置</div>
<div class="a" style="left:30px;top:309px;font-size:12.8px;line-height:20px;color:#1d2129;-webkit-text-stroke:0.4px #1d2129">执行配置</div>
<div class="a" style="left:30px;top:341px;font-size:12px;line-height:20px;color:#86909c">归档规则</div>
<div class="a" style="left:234.5px;top:341px;font-size:12px;line-height:20px;color:#1d2129">按分区名称</div>
<div class="a" style="left:439px;top:341px;font-size:12px;line-height:20px;color:#86909c">分区字段</div>
<div class="a" style="left:643px;top:341px;font-size:12px;line-height:20px;color:#1d2129">ds</div>
<div class="a" style="left:30px;top:377px;font-size:12px;line-height:20px;color:#86909c">日期格式</div>
<div class="a" style="left:234.5px;top:377px;font-size:12px;line-height:20px;color:#1d2129">yyyyMMdd</div>
<div class="a" style="left:439px;top:377px;font-size:12px;line-height:20px;color:#86909c">分区保留范围</div>
<div class="a" style="left:643px;top:377px;font-size:12px;line-height:20px;color:#1d2129">最近7 天</div>
<div class="a" style="left:875px;top:0px;width:1px;height:694px;background:#f7f8f9"></div>
</div>
</body></html>
